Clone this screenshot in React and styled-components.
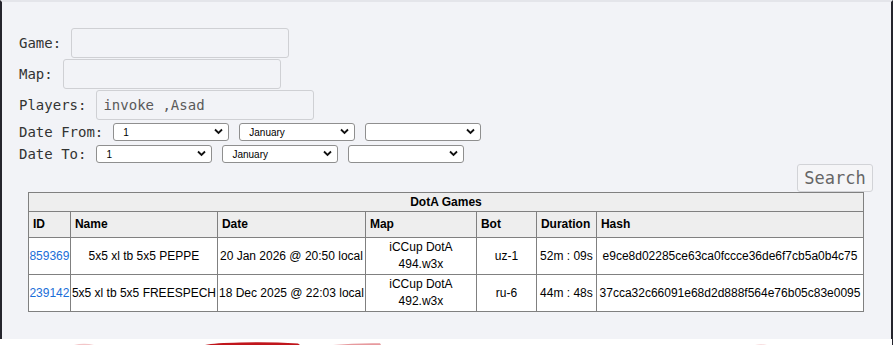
import React from "react";
import styled, { createGlobalStyle } from "styled-components";

const Global = createGlobalStyle`
  html, body { margin: 0; padding: 0; background: #ffffff; }
  body { font-family: "Liberation Sans", Arial, sans-serif; }
`;

const Page = styled.div`
  width: 893px;
  height: 345px;
  display: flex;
  flex-direction: column;
  overflow: hidden;
`;

const Panel = styled.main`
  flex: 1;
  box-sizing: border-box;
  background: #f2f3f7;
  border-top: 2px solid #e4e5ea;
  border-left: 2px solid #25252d;
  border-right: 2px solid #25252d;
  padding: 26px 18px 0 17px;
  display: flex;
  flex-direction: column;
`;

const Footer = styled.footer`
  height: 6px;
  background: #ffffff;
  border-right: 1px solid #25252d;
  display: flex;
`;

const Form = styled.form`
  display: flex;
  flex-direction: column;
`;

const FieldRow = styled.div`
  display: flex;
  align-items: center;
  gap: 10px;
  height: ${(p) => p.$h}px;
  margin-bottom: ${(p) => p.$mb}px;
`;

const Label = styled.label`
  font-family: "DejaVu Sans Mono", "Liberation Mono", monospace;
  font-size: 14px;
  color: #333333;
  white-space: pre;
`;

const TextInput = styled.input`
  box-sizing: border-box;
  width: 218px;
  height: 30px;
  margin: 0;
  padding: 0 6px;
  border: 1px solid #cfd0d4;
  border-radius: 3px;
  background: #f2f3f7;
  font-family: "DejaVu Sans Mono", "Liberation Mono", monospace;
  font-size: 14px;
  color: #5a5a5a;
  outline: none;
`;

const SelectWrap = styled.span`
  position: relative;
  display: inline-flex;
  width: 116px;
  height: 18px;
`;

const Select = styled.select`
  appearance: none;
  -webkit-appearance: none;
  box-sizing: border-box;
  width: 100%;
  height: 100%;
  margin: 0;
  padding: 0 20px 0 9px;
  border: 1px solid #8f8f8f;
  border-radius: 3px;
  background: #ffffff;
  font-family: "Liberation Sans", Arial, sans-serif;
  font-size: 10px;
  color: #000000;
  outline: none;
`;

const Chevron = styled.svg`
  position: absolute;
  right: 6px;
  top: 5px;
  width: 9px;
  height: 7px;
  pointer-events: none;
`;

const ButtonBar = styled.div`
  display: flex;
  justify-content: flex-end;
`;

const SearchButton = styled.button`
  box-sizing: border-box;
  width: 76px;
  height: 28px;
  margin: 0;
  padding: 0;
  border: 1px solid #d2d3d7;
  border-radius: 3px;
  background: #f5f5f7;
  font-family: "DejaVu Sans Mono", "Liberation Mono", monospace;
  font-size: 17px;
  color: #666666;
`;

const Table = styled.table`
  border-collapse: collapse;
  table-layout: fixed;
  width: 835px;
  margin: 0 auto;
  font-family: "Liberation Sans", Arial, sans-serif;
  font-size: 12px;
  color: #000000;
  border: 1px solid #808080;
`;

const TitleCell = styled.th`
  background: #eeeeee;
  border: 1px solid #808080;
  padding: 1px;
  line-height: 16px;
  text-align: center;
  font-weight: bold;
`;

const HeadCell = styled.th`
  background: #eeeeee;
  border: 1px solid #808080;
  padding: 4px 4px;
  line-height: 17px;
  text-align: left;
  font-weight: bold;
`;

const Cell = styled.td`
  background: #ffffff;
  border: 1px solid #808080;
  padding: 1px 0;
  line-height: 17px;
  text-align: center;
  white-space: ${(p) => (p.$wrap ? "normal" : "nowrap")};
  overflow: visible;
`;

const IdLink = styled.a`
  color: #1a6ed8;
  text-decoration: none;
`;

const Arcs = styled.svg`
  display: block;
  width: 892px;
  height: 6px;
`;

const columns = [
  { name: "ID", w: 42 },
  { name: "Name", w: 147 },
  { name: "Date", w: 148 },
  { name: "Map", w: 111 },
  { name: "Bot", w: 60 },
  { name: "Duration", w: 60 },
  { name: "Hash", w: 267 },
];

const games = [
  {
    id: "859369",
    name: "5x5 xl tb 5x5 PEPPE",
    date: "20 Jan 2026 @ 20:50 local",
    map: ["iCCup DotA", "494.w3x"],
    bot: "uz-1",
    duration: "52m : 09s",
    hash: "e9ce8d02285ce63ca0fccce36de6f7cb5a0b4c75",
  },
  {
    id: "239142",
    name: "5x5 xl tb 5x5 FREESPECH",
    date: "18 Dec 2025 @ 22:03 local",
    map: ["iCCup DotA", "492.w3x"],
    bot: "ru-6",
    duration: "44m : 48s",
    hash: "37cca32c66091e68d2d888f564e76b05c83e0095",
  },
];

function DropDown({ value }) {
  return (
    <SelectWrap>
      <Select defaultValue={value}>
        <option value={value}>{value}</option>
      </Select>
      <Chevron viewBox="0 0 9 7">
        <path d="M1 1.5 L4.5 5 L8 1.5" fill="none" stroke="#111" strokeWidth="1.8" />
      </Chevron>
    </SelectWrap>
  );
}

export default function App() {
  return (
    <>
      <Global />
      <Page>
        <Panel>
          <Form onSubmit={(e) => e.preventDefault()}>
            <FieldRow $h={30} $mb={1}>
              <Label>Game:</Label>
              <TextInput defaultValue="" />
            </FieldRow>
            <FieldRow $h={30} $mb={1}>
              <Label>Map:</Label>
              <TextInput defaultValue="" />
            </FieldRow>
            <FieldRow $h={30} $mb={2}>
              <Label>Players:</Label>
              <TextInput defaultValue="invoke ,Asad" />
            </FieldRow>
            <FieldRow $h={20} $mb={2}>
              <Label>Date From:</Label>
              <DropDown value="1" />
              <DropDown value="January" />
              <DropDown value="" />
            </FieldRow>
            <FieldRow $h={20} $mb={0}>
              <Label>Date To:</Label>
              <DropDown value="1" />
              <DropDown value="January" />
              <DropDown value="" />
            </FieldRow>
            <ButtonBar>
              <SearchButton type="submit">Search</SearchButton>
            </ButtonBar>
          </Form>
          <Table>
            <colgroup>
              {columns.map((c) => (
                <col key={c.name} style={{ width: c.w }} />
              ))}
            </colgroup>
            <thead>
              <tr>
                <TitleCell colSpan={7}>DotA Games</TitleCell>
              </tr>
              <tr>
                {columns.map((c) => (
                  <HeadCell key={c.name}>{c.name}</HeadCell>
                ))}
              </tr>
            </thead>
            <tbody>
              {games.map((g) => (
                <tr key={g.id}>
                  <Cell>
                    <IdLink href="#">{g.id}</IdLink>
                  </Cell>
                  <Cell>{g.name}</Cell>
                  <Cell>{g.date}</Cell>
                  <Cell $wrap>
                    {g.map[0]}
                    <br />
                    {g.map[1]}
                  </Cell>
                  <Cell>{g.bot}</Cell>
                  <Cell>{g.duration}</Cell>
                  <Cell>{g.hash}</Cell>
                </tr>
              ))}
            </tbody>
          </Table>
        </Panel>
        <Footer>
          <Arcs viewBox="0 0 892 6">
            <path d="M74 6 Q84 3.5 94 6 Z" fill="#f3c6c8" />
            <path d="M205 6 Q215 4 240 3.6 Q268 2.8 298 4.5 L300 6 Z" fill="#c0161c" />
            <path d="M333 6 Q355 3.8 380 4.2 L381 6 Z" fill="#e79a9e" />
            <path d="M755 6 Q761 4.4 767 6 Z" fill="#f6d3d5" />
          </Arcs>
        </Footer>
      </Page>
    </>
  );
}
